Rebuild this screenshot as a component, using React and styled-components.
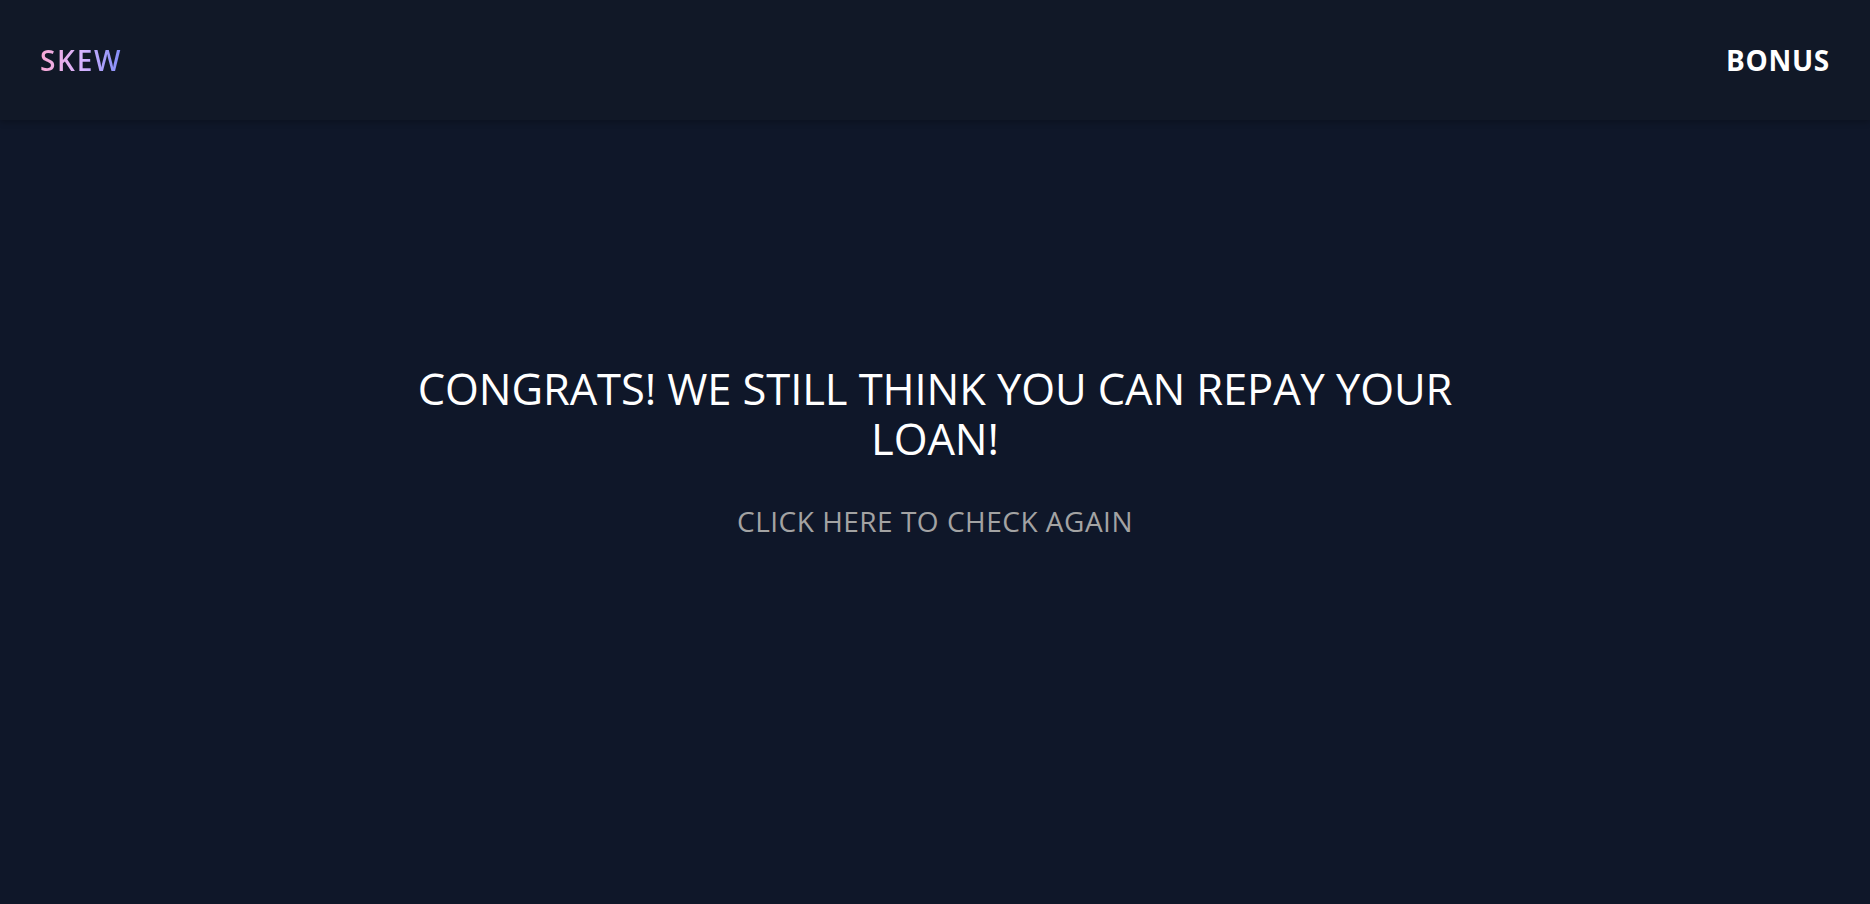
import React from "react";
import styled, { createGlobalStyle } from "styled-components";

const Global = createGlobalStyle`
  html, body { margin: 0; padding: 0; background: #0f1729; }
  body { font-family: "Open Sans", "Noto Sans", sans-serif; color: #fff; }
`;

const Page = styled.div`
  height: 904px;
  display: flex;
  flex-direction: column;
  background: #0f1729;
`;

const Header = styled.header`
  height: 120px;
  flex: none;
  display: flex;
  align-items: center;
  justify-content: space-between;
  padding: 0 40px;
  background: #111827;
  box-shadow: 0 2px 6px rgba(0, 0, 0, 0.25);
  position: relative;
  z-index: 1;
`;

const Logo = styled.div`
  font-size: 28px;
  font-weight: 600;
  letter-spacing: 1.7px;
  background: linear-gradient(90deg, #f9a8d4, #d8b4fe, #818cf8);
  -webkit-background-clip: text;
  background-clip: text;
  color: transparent;
`;

const NavLink = styled.a`
  font-size: 28px;
  font-weight: 700;
  color: #fff;
  letter-spacing: 0.7px;
  text-decoration: none;
  cursor: pointer;
`;

const Main = styled.main`
  flex: 1;
  display: flex;
  flex-direction: column;
  align-items: center;
  justify-content: center;
  padding-bottom: 120px;
  text-align: center;
`;

const Title = styled.h1`
  margin: 0;
  max-width: 1100px;
  font-size: 43.5px;
  font-weight: 400;
  line-height: 50px;
  letter-spacing: -0.1px;
`;

const Retry = styled.a`
  margin-top: 38px;
  font-size: 28px;
  font-weight: 400;
  color: #a3a3a3;
  letter-spacing: 0.5px;
  cursor: pointer;
`;

export default function App() {
  return (
    <>
      <Global />
      <Page>
        <Header>
          <Logo>SKEW</Logo>
          <NavLink>BONUS</NavLink>
        </Header>
        <Main>
          <Title>CONGRATS! WE STILL THINK YOU CAN REPAY YOUR LOAN!</Title>
          <Retry>CLICK HERE TO CHECK AGAIN</Retry>
        </Main>
      </Page>
    </>
  );
}
